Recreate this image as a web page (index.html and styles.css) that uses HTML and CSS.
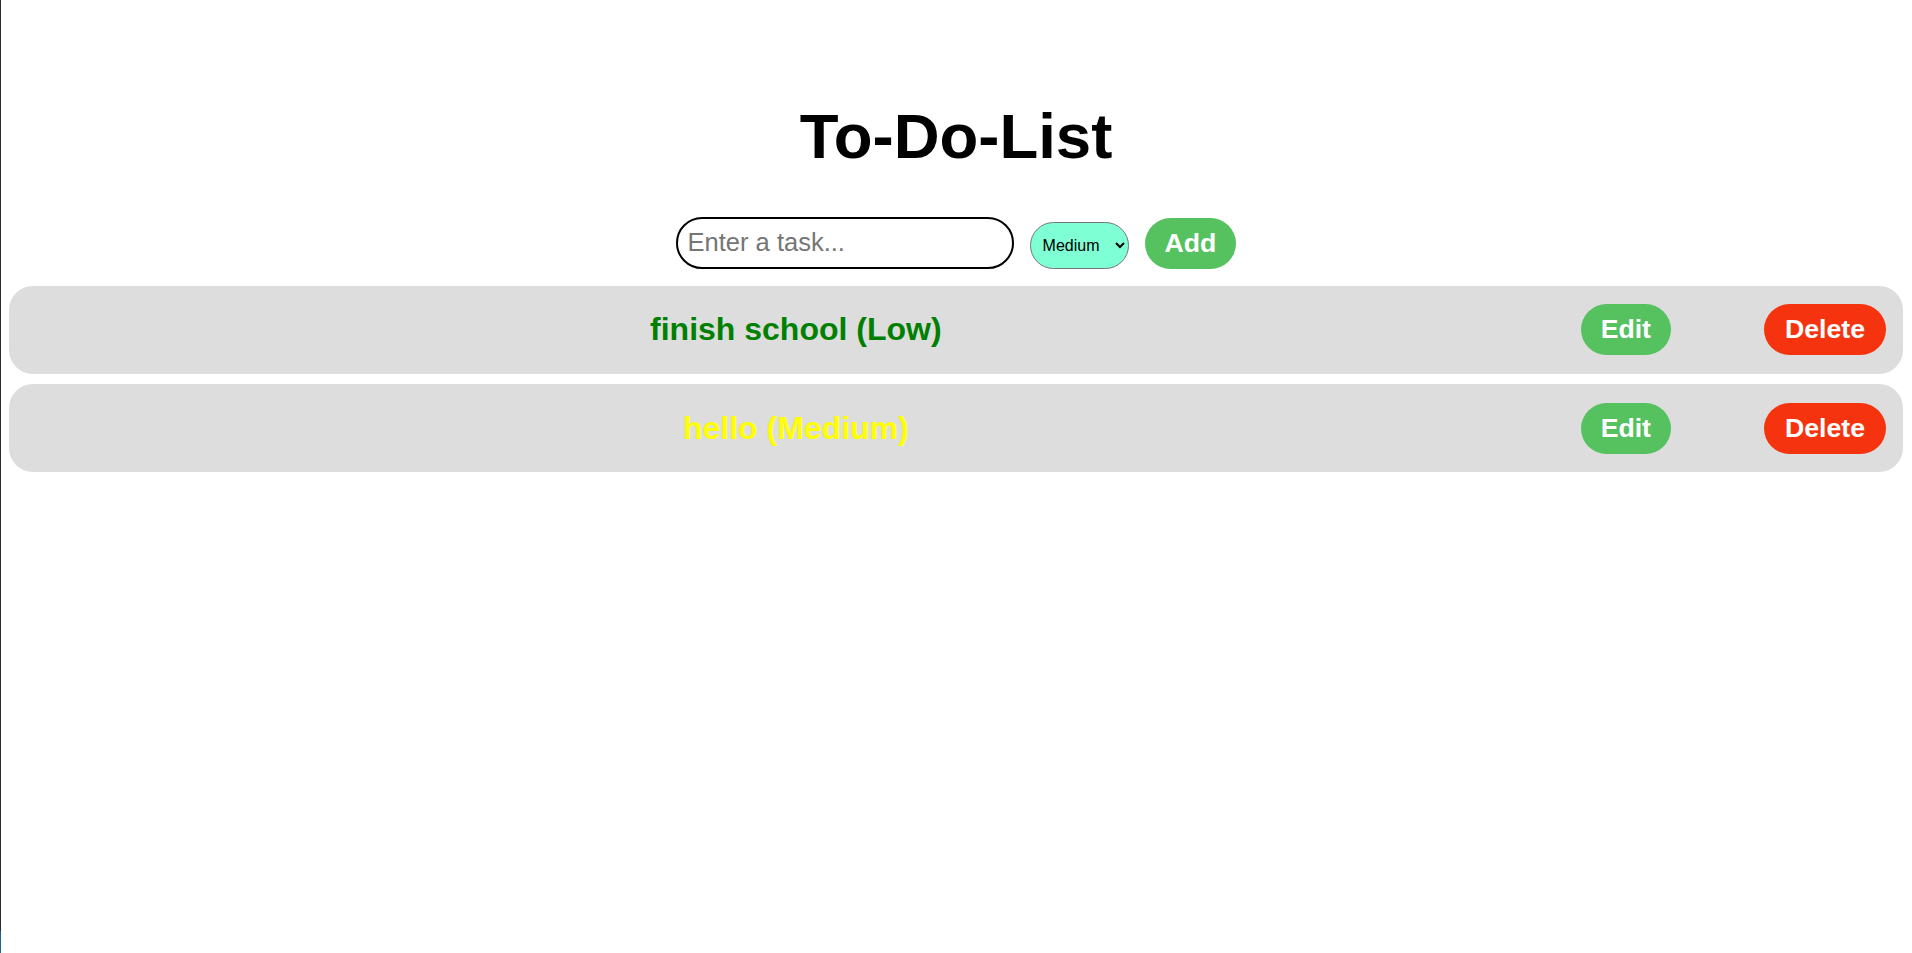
FILE: index.html
```html
<!DOCTYPE html>
<html lang="en">
<head>
<meta charset="utf-8">
<title>To-Do-List</title>
<link rel="stylesheet" href="styles.css">
</head>
<body>
<div class="app">
  <h1 class="title">To-Do-List</h1>
  <div class="entry">
    <input class="task-input" type="text" placeholder="Enter a task...">
    <select class="priority">
      <option>Low</option>
      <option selected>Medium</option>
      <option>High</option>
    </select>
    <button class="btn btn-add">Add</button>
  </div>
  <ul class="tasks">
    <li class="task">
      <span class="task-text low">finish school (Low)</span>
      <button class="btn btn-edit">Edit</button>
      <button class="btn btn-delete">Delete</button>
    </li>
    <li class="task">
      <span class="task-text medium">hello (Medium)</span>
      <button class="btn btn-edit">Edit</button>
      <button class="btn btn-delete">Delete</button>
    </li>
  </ul>
</div>
</body>
</html>
```

FILE: styles.css
```css
html {
  margin: 0;
  min-height: 100%;
  background:
    linear-gradient(#1f5f93, #1f5f93) 0 100% / 1px 22px no-repeat,
    linear-gradient(to right, #2b2b2b 1px, #ffffff 1px);
}

body {
  margin: 0 9px;
  font-family: "Liberation Sans", Arial, sans-serif;
}

.app {
  padding-top: 100px;
}

.title {
  margin: 0;
  text-align: center;
  font-size: 63.5px;
  font-weight: bold;
  line-height: normal;
  color: #000;
}

.entry {
  margin-top: 44.5px;
  display: flex;
  justify-content: center;
  align-items: flex-end;
  gap: 16px;
}

.task-input {
  box-sizing: border-box;
  width: 338px;
  height: 52px;
  padding: 0 10px;
  border: 2px solid #000;
  border-radius: 26px;
  font-family: "Liberation Sans", Arial, sans-serif;
  font-size: 25.5px;
  color: #000;
  background: #fff;
  outline: none;
}

.task-input::placeholder {
  color: #757575;
}

.priority {
  box-sizing: border-box;
  width: 99px;
  height: 47px;
  padding: 0 4px 0 8px;
  border: 1px solid #767676;
  border-radius: 24px;
  background-color: #7fffd4;
  font-family: "Liberation Sans", Arial, sans-serif;
  font-size: 16px;
  color: #000;
}

.btn {
  box-sizing: border-box;
  height: 51px;
  padding: 0 20px;
  border: none;
  border-radius: 26px;
  font-family: "Liberation Sans", Arial, sans-serif;
  font-size: 26.67px;
  font-weight: bold;
  line-height: 51px;
  color: #fff;
  cursor: pointer;
}

.btn-add,
.btn-edit {
  background: #55c15f;
}

.btn-delete {
  background: #f5340f;
  padding: 0 21px;
}

.tasks {
  list-style: none;
  margin: 17px 0 0;
  padding: 0;
}

.task {
  display: flex;
  align-items: center;
  padding: 18.5px 17px;
  margin-bottom: 10.5px;
  background: #dddddd;
  border-radius: 24px;
}

.task-text {
  flex: 1;
  text-align: center;
  font-size: 32px;
  font-weight: bold;
}

.task-text.low {
  color: #008000;
}

.task-text.medium {
  color: #ffff00;
}

.btn-edit {
  margin-left: 15px;
}

.btn-delete {
  margin-left: 93px;
}
```
